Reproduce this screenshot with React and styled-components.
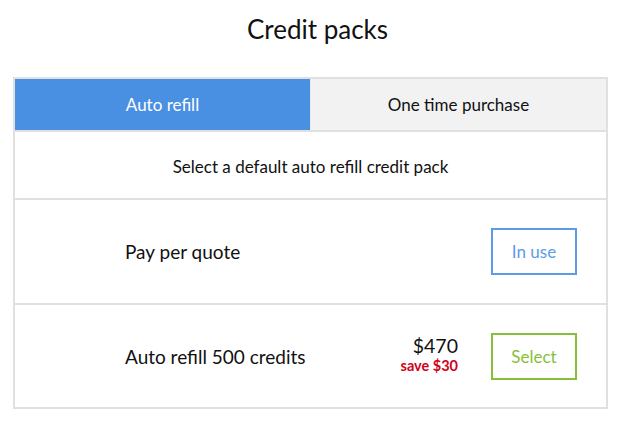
import React from 'react'
import styled, { createGlobalStyle } from 'styled-components'

const GlobalStyle = createGlobalStyle`
  body {
    margin: 0;
    background: #fff;
    font-family: Lato, "Open Sans", sans-serif;
    color: #111;
  }
`;

const Page = styled.div`
  width: 635px;
  padding-top: 12px;
`;

const Title = styled.h1`
  margin: 0 0 30px;
  text-align: center;
  font-size: 26px;
  font-weight: 400;
  line-height: 35px;
`;

const Card = styled.div`
  margin: 0 27px 0 13px;
  border: 2px solid #e0e0e0;
`;

const Tabs = styled.div`
  display: flex;
  border-bottom: 2px solid #e0e0e0;
`;

const Tab = styled.div`
  flex: 1;
  height: 51px;
  display: flex;
  align-items: center;
  justify-content: center;
  font-size: 17px;
  background: ${p => (p.$active ? '#4a90e2' : '#f2f2f2')};
  color: ${p => (p.$active ? '#fff' : '#111')};
  border-left: ${p => (p.$active ? 'none' : '1px solid #e8e8e8')};
`;

const Hint = styled.div`
  height: 63px;
  display: flex;
  align-items: center;
  justify-content: center;
  padding-top: 3px;
  font-size: 17px;
  border-bottom: 2px solid #e0e0e0;
`;

const Row = styled.div`
  height: ${p => p.$h}px;
  display: flex;
  align-items: center;
  padding: 0 29px 0 110px;
  border-bottom: ${p => (p.$last ? 'none' : '2px solid #e0e0e0')};
`;

const Label = styled.div`
  flex: 1;
  font-size: 19px;
`;

const Price = styled.div`
  display: flex;
  flex-direction: column;
  align-items: flex-end;
  margin-right: 33px;
  margin-bottom: 3px;
`;

const Amount = styled.span`
  font-size: 19.5px;
  line-height: 20px;
`;

const Save = styled.span`
  margin-top: 2px;
  font-size: 14.5px;
  font-weight: 700;
  color: #d0021b;
  line-height: 16px;
`;

const Button = styled.button`
  width: 86px;
  height: 47px;
  background: #fff;
  border: 2px solid ${p => p.$color};
  color: ${p => p.$color};
  font-family: Lato, "Open Sans", sans-serif;
  font-size: 17px;
  cursor: pointer;
`;

export default function App() {
  return (
    <Page>
      <GlobalStyle />
      <Title>Credit packs</Title>
      <Card>
        <Tabs>
          <Tab $active>Auto refill</Tab>
          <Tab>One time purchase</Tab>
        </Tabs>
        <Hint>Select a default auto refill credit pack</Hint>
        <Row $h={103}>
          <Label>Pay per quote</Label>
          <Button $color="#5b9bea">In use</Button>
        </Row>
        <Row $h={102} $last>
          <Label>Auto refill 500 credits</Label>
          <Price>
            <Amount>$470</Amount>
            <Save>save $30</Save>
          </Price>
          <Button $color="#86c03a">Select</Button>
        </Row>
      </Card>
    </Page>
  )
}
